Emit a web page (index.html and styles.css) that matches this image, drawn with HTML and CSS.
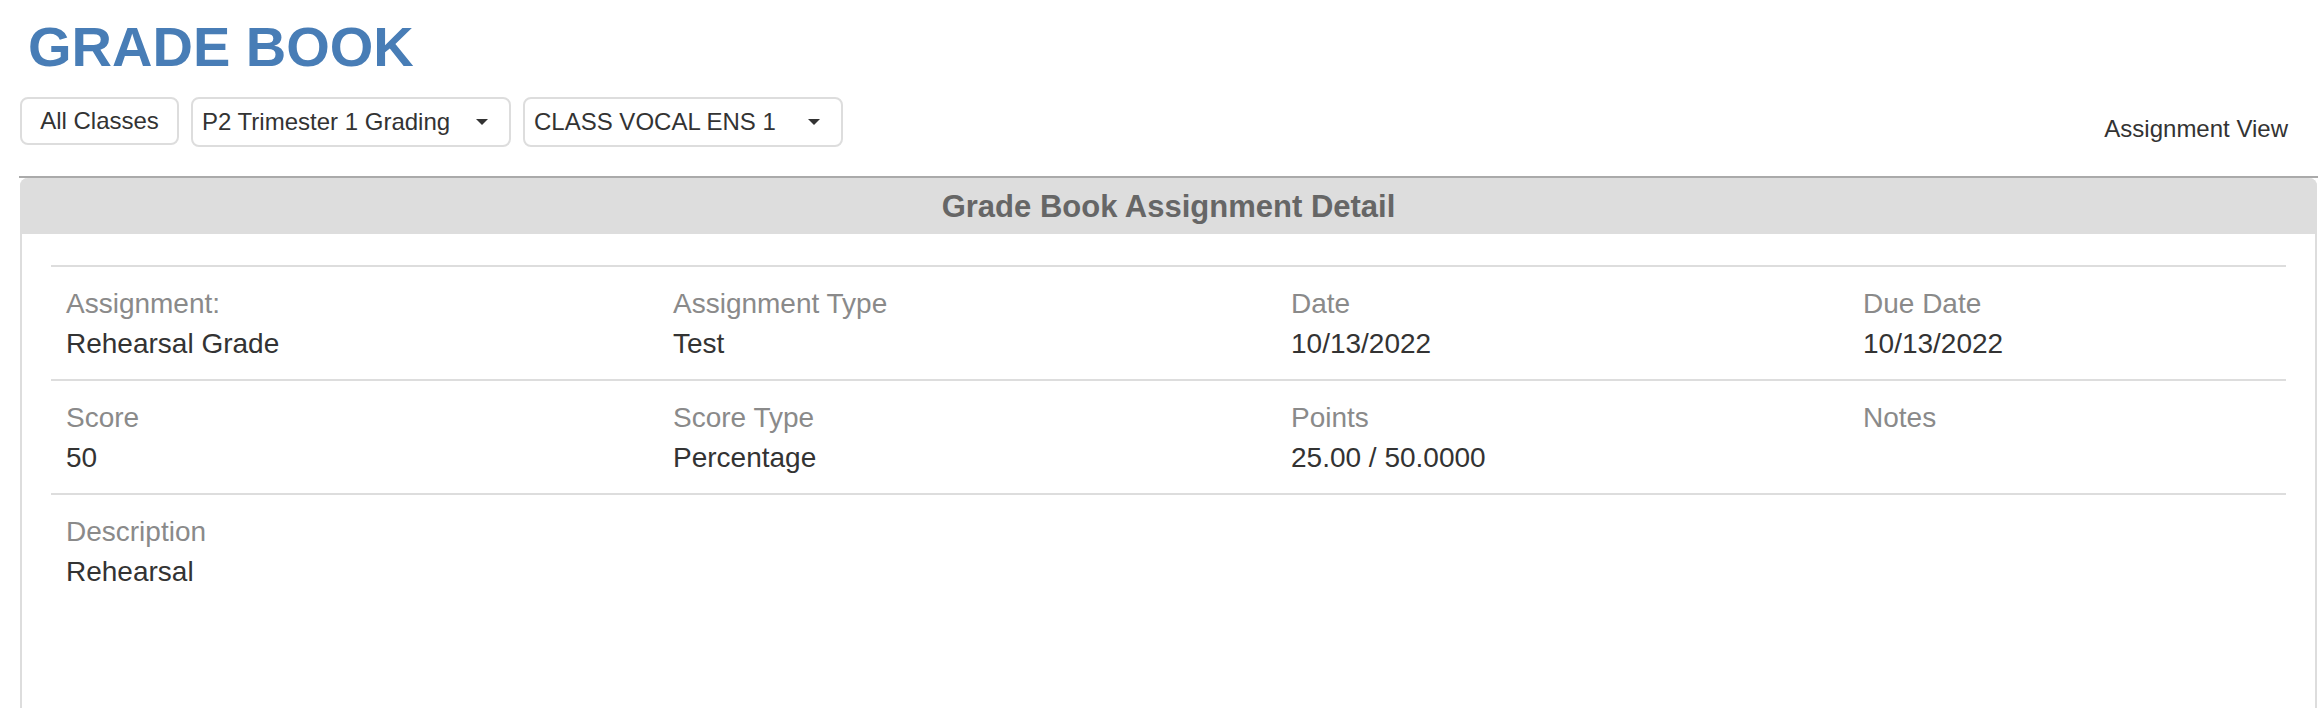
FILE: index.html
```html
<!DOCTYPE html>
<html>
<head>
<meta charset="utf-8">
<title>Grade Book</title>
<link rel="stylesheet" href="styles.css">
</head>
<body>
<div class="page">
  <h1 class="title">GRADE BOOK</h1>
  <div class="toolbar">
    <div class="controls">
      <div class="btn">All Classes</div>
      <div class="select"><span>P2 Trimester 1 Grading</span><span class="caret"></span></div>
      <div class="select"><span>CLASS VOCAL ENS 1</span><span class="caret"></span></div>
    </div>
    <div class="view-label">Assignment View</div>
  </div>
  <div class="rule"></div>
  <div class="panel">
    <div class="panel-heading">Grade Book Assignment Detail</div>
    <div class="panel-body">
      <div class="detail-row">
        <div class="cell"><div class="label">Assignment:</div><div class="value">Rehearsal Grade</div></div>
        <div class="cell"><div class="label">Assignment Type</div><div class="value">Test</div></div>
        <div class="cell"><div class="label">Date</div><div class="value">10/13/2022</div></div>
        <div class="cell"><div class="label">Due Date</div><div class="value">10/13/2022</div></div>
      </div>
      <div class="detail-row">
        <div class="cell"><div class="label">Score</div><div class="value">50</div></div>
        <div class="cell"><div class="label">Score Type</div><div class="value">Percentage</div></div>
        <div class="cell"><div class="label">Points</div><div class="value">25.00 / 50.0000</div></div>
        <div class="cell"><div class="label">Notes</div><div class="value"></div></div>
      </div>
      <div class="detail-row last">
        <div class="cell"><div class="label">Description</div><div class="value">Rehearsal</div></div>
        <div class="cell"></div>
        <div class="cell"></div>
        <div class="cell"></div>
      </div>
    </div>
  </div>
</div>
</body>
</html>
```
FILE: styles.css
```css
* { box-sizing: border-box; }
html, body { margin: 0; padding: 0; background: #fff; }
body {
  font-family: "Liberation Sans", Arial, Helvetica, sans-serif;
  color: #333;
}
.page {
  margin-left: 19px;
  width: 2299px;
}
.title {
  margin: 15px 0 0 9px;
  font-size: 56px;
  line-height: 64px;
  font-weight: bold;
  color: #487db6;
}
.toolbar {
  display: flex;
  justify-content: space-between;
  align-items: flex-start;
  margin-top: 18px;
  padding-right: 30px;
}
.controls {
  display: flex;
  gap: 12px;
  margin-left: 1px;
}
.btn, .select {
  height: 50px;
  border: 2px solid #dddddd;
  border-radius: 8px;
  font-size: 24px;
  line-height: 46px;
  color: #333;
  background: #fff;
}
.btn {
  width: 159px;
  text-align: center;
  height: 48px;
  line-height: 44px;
}
.select {
  width: 320px;
  padding: 0 21px 0 9px;
  display: flex;
  justify-content: space-between;
  align-items: center;
}
.caret {
  width: 0;
  height: 0;
  border-left: 6px solid transparent;
  border-right: 6px solid transparent;
  border-top: 6px solid #333;
}
.view-label {
  margin-top: 17px;
  font-size: 24px;
  line-height: 30px;
  color: #333;
}
.rule {
  margin-top: 29px;
  border-top: 2px solid #aaaaaa;
}
.panel {
  margin-left: 1px;
  margin-right: 1px;
  border: 2px solid #dddddd;
  border-top: none;
  border-radius: 8px 8px 0 0;
  min-height: 620px;
}
.panel-heading {
  background: #dddddd;
  height: 56px;
  line-height: 58px;
  text-align: center;
  font-size: 31px;
  font-weight: bold;
  color: #666;
  border-radius: 8px 8px 0 0;
  margin: 0 -2px;
}
.panel-body {
  padding: 31px 29px 30px 29px;
}
.detail-row {
  display: grid;
  grid-template-columns: 607px 618px 572px 1fr;
  border-top: 2px solid #dddddd;
}
.cell {
  padding: 17px 15px 15px 15px;
  font-size: 28px;
  line-height: 40px;
}
.label {
  color: #8a8a8a;
  height: 40px;
}
.value {
  color: #333;
  height: 40px;
}
```
